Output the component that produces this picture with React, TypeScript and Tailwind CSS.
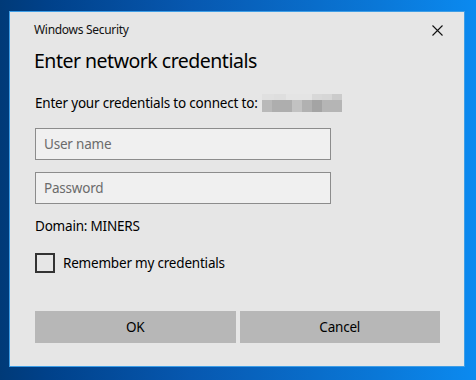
import React from 'react';

export default function App() {
  return (
    <div className="w-[476px] h-[380px] overflow-hidden bg-[linear-gradient(90deg,#003a78_0%,#00418a_10%,#0758b0_40%,#0a78d8_80%,#0b8af0_100%)] pt-[11px] pl-[9px] font-['Segoe_UI','Noto_Sans',sans-serif]">
      {/* Dialog window */}
      <div className="w-[456px] h-[356px] bg-[#e6e6e6] border border-[#3f9ee6] flex flex-col pl-[24px] pr-[24px] text-[#000]">
        {/* Caption bar */}
        <div className="flex items-center justify-between h-[34px] pt-[2px]">
          <span className="text-[12px] tracking-[-0.3px] text-[#111]">Windows Security</span>
          <svg width="11" height="11" viewBox="0 0 11 11" className="mr-[-3px]">
            <path d="M0.5 0.5 L10.5 10.5 M10.5 0.5 L0.5 10.5" stroke="#111" strokeWidth="1.1" />
          </svg>
        </div>

        <h1 className="text-[19.5px] tracking-[-0.5px] leading-[28px] mt-[1px] text-[#000]">Enter network credentials</h1>

        <div className="flex items-center mt-[18px] h-[20px] text-[13.5px] tracking-[-0.2px] pl-[1px]">
          <span>Enter your credentials to connect to:</span>
          <span className="ml-[4px] w-[80px] h-[18px] flex flex-col">
            <span className="flex h-[6px]">
              <span className="w-[12px] bg-[#e0e0e0]" />
              <span className="w-[12px] bg-[#dedede]" />
              <span className="w-[26px] bg-[#e4e4e4]" />
              <span className="w-[10px] bg-[#d8d8d8]" />
              <span className="w-[10px] bg-[#d6d6d6]" />
              <span className="w-[10px] bg-[#cbcbcb]" />
            </span>
            <span className="flex h-[12px]">
              <span className="w-[10px] bg-[#b9b9b9]" />
              <span className="w-[20px] bg-[#aeaeae]" />
              <span className="w-[10px] bg-[#c2c2c2]" />
              <span className="w-[10px] bg-[#b1b1b1]" />
              <span className="w-[10px] bg-[#a4a4a4]" />
              <span className="w-[20px] bg-[#b5b5b5]" />
            </span>
          </span>
        </div>

        <div className="mt-[15px] ml-[1px] w-[296px] h-[32px] border border-[#8c8c8c] bg-[#f0f0f0] flex items-center pl-[8px] text-[13.5px] tracking-[-0.2px] text-[#6b6b6b]">
          User name
        </div>
        <div className="mt-[12px] ml-[1px] w-[296px] h-[32px] border border-[#8c8c8c] bg-[#f0f0f0] flex items-center pl-[8px] text-[13.5px] tracking-[-0.2px] text-[#6b6b6b]">
          Password
        </div>

        <div className="mt-[12px] ml-[1px] h-[20px] flex items-center text-[13.5px] tracking-[-0.2px]">Domain: MINERS</div>

        <div className="mt-[17px] ml-[1px] flex items-center gap-[8px] text-[13.5px] tracking-[-0.2px]">
          <span className="w-[20px] h-[20px] border-2 border-[#333]" />
          <span>Remember my credentials</span>
        </div>

        <div className="mt-[38px] ml-[1px] flex gap-[4px]">
          <button className="w-[201px] h-[32px] bg-[#b7b7b7] text-[13.5px] tracking-[-0.2px] text-[#000]">OK</button>
          <button className="w-[201px] h-[32px] bg-[#b7b7b7] text-[13.5px] tracking-[-0.2px] text-[#000]">Cancel</button>
        </div>
      </div>
    </div>
  );
}
